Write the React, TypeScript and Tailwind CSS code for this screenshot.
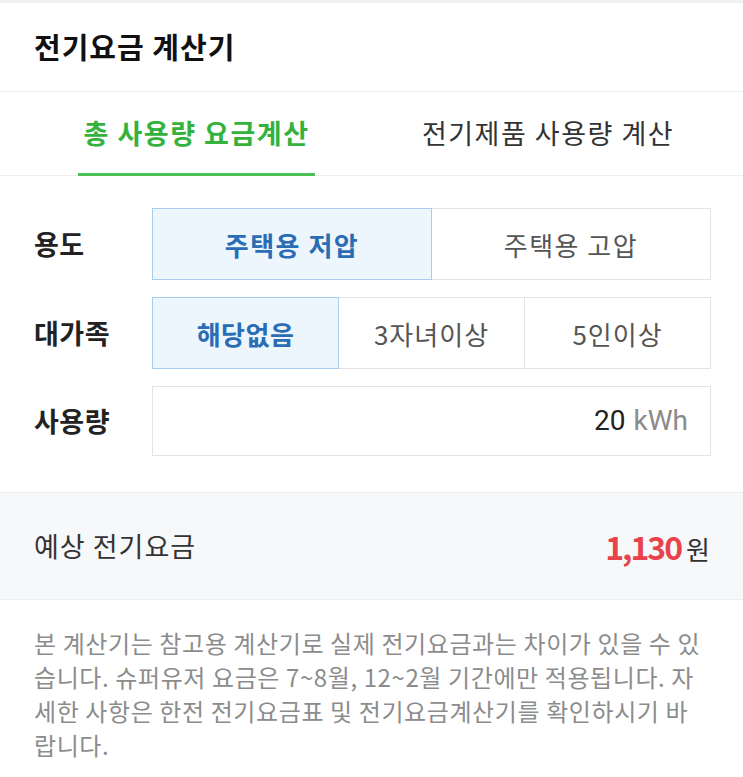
import React from "react";

const font = { fontFamily: '"Noto Sans CJK KR", "Noto Sans", sans-serif' };

export default function App() {
  return (
    <div
      className="w-[743px] min-h-[777px] bg-white text-[#222] border-t-[3px] border-[#eef0f2]"
      style={font}
    >
      {/* Header */}
      <div className="h-[89px] flex items-center px-[34px] border-b border-[#eceef0]">
        <h1 className="text-[29px] font-semibold tracking-[1px] text-[#111]">전기요금 계산기</h1>
      </div>

      {/* Tabs */}
      <div className="h-[84px] flex items-stretch border-b border-[#eceef0]">
        <div className="ml-[78px] w-[237px] flex items-center justify-center relative">
          <span className="text-[27px] font-semibold text-[#33b23e] tracking-[1.5px]">총 사용량 요금계산</span>
          <div className="absolute left-0 right-0 -bottom-px h-[3px] bg-[#4cbf55]" />
        </div>
        <div className="ml-auto mr-[64px] w-[262px] flex items-center justify-center">
          <span className="text-[27px] text-[#333] tracking-[1.5px]">전기제품 사용량 계산</span>
        </div>
      </div>

      {/* Form */}
      <div className="pt-[32px] pb-[36px] pl-[34px] pr-[32px] flex flex-col gap-[17px]">
        <div className="flex items-center">
          <div className="w-[118px] text-[27px] font-semibold tracking-[0.5px]">용도</div>
          <div className="flex flex-1 h-[72px]">
            <div className="flex-1 flex items-center justify-center bg-[#eef6fd] border border-[#a9cdee] relative z-10 text-[26px] font-semibold text-[#2a6db5] tracking-[1.5px]">
              주택용 저압
            </div>
            <div className="flex-1 -ml-px flex items-center justify-center border border-[#e4e4e4] text-[26px] text-[#555] tracking-[1.5px]">
              주택용 고압
            </div>
          </div>
        </div>

        <div className="flex items-center">
          <div className="w-[118px] text-[27px] font-semibold tracking-[0.5px]">대가족</div>
          <div className="flex flex-1 h-[72px]">
            <div className="flex-1 flex items-center justify-center bg-[#eef6fd] border border-[#a9cdee] relative z-10 text-[26px] font-semibold text-[#2a6db5] tracking-[0.5px]">
              해당없음
            </div>
            <div className="flex-1 -ml-px flex items-center justify-center border border-[#e4e4e4] text-[26px] text-[#555] tracking-[1px]">
              3자녀이상
            </div>
            <div className="flex-1 -ml-px flex items-center justify-center border border-[#e4e4e4] text-[26px] text-[#555] tracking-[1px]">
              5인이상
            </div>
          </div>
        </div>

        <div className="flex items-center">
          <div className="w-[118px] text-[27px] font-semibold tracking-[0.5px]">사용량</div>
          <div className="flex flex-1 h-[70px] items-center justify-end pr-[22px] border border-[#e4e4e4]">
            <span className="text-[28px] text-[#222]" style={{ fontFamily: "Roboto, sans-serif" }}>20</span>
            <span className="ml-[8px] text-[28px] text-[#8a8a8a]" style={{ fontFamily: "Roboto, sans-serif" }}>kWh</span>
          </div>
        </div>
      </div>

      {/* Result */}
      <div className="h-[108px] flex items-center justify-between pl-[34px] pr-[33px] bg-[#f7f8fa] border-y border-[#eceef0]">
        <span className="text-[27px] text-[#333] tracking-[1px]">예상 전기요금</span>
        <div className="flex items-baseline">
          <span className="text-[32px] font-bold text-[#e8434b] tracking-[-2px]">1,130</span>
          <span className="ml-[5px] text-[26px] text-[#333]">원</span>
        </div>
      </div>

      {/* Disclaimer */}
      <div className="pt-[26px] px-[34px] text-[24px] leading-[34px] text-[#8c8c8c] tracking-[0.6px]">
        <div className="whitespace-nowrap">본 계산기는 참고용 계산기로 실제 전기요금과는 차이가 있을 수 있</div>
        <div className="whitespace-nowrap">습니다. 슈퍼유저 요금은 7~8월, 12~2월 기간에만 적용됩니다. 자</div>
        <div className="whitespace-nowrap">세한 사항은 한전 전기요금표 및 전기요금계산기를 확인하시기 바</div>
        <div className="whitespace-nowrap">랍니다.</div>
      </div>
    </div>
  );
}
